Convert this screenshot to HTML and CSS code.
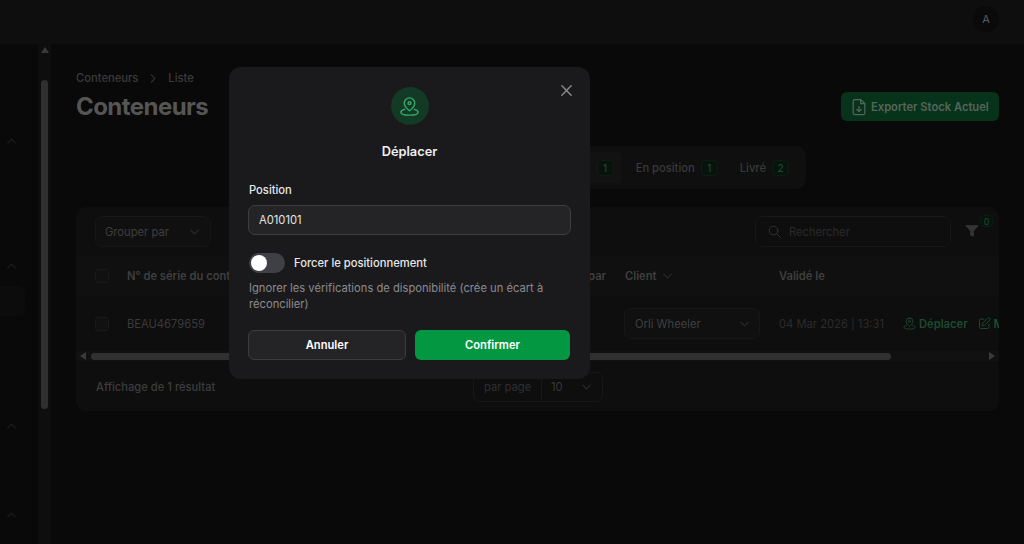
FILE: index.html
```html
<!DOCTYPE html>
<html lang="fr">
<head>
    <meta charset="UTF-8">
    <meta name="viewport" content="width=device-width, initial-scale=1.0">
    <title>Conteneurs</title>
    <link rel="stylesheet" href="styles.css">
</head>
<body>
    <div class="topbar">
        <div class="avatar">A</div>
    </div>

    <div class="layout">
        <aside class="sidebar">
            <div class="nav-group group-one"><svg class="nav-chevron" viewBox="0 0 12 8"><path d="M1 6.5l5-5 5 5"/></svg></div>
            <div class="nav-group group-two">
                <svg class="nav-chevron" viewBox="0 0 12 8"><path d="M1 6.5l5-5 5 5"/></svg>
                <div class="nav-active"></div>
            </div>
            <div class="nav-group group-three"><svg class="nav-chevron" viewBox="0 0 12 8"><path d="M1 6.5l5-5 5 5"/></svg></div>
            <div class="nav-group"><svg class="nav-chevron" viewBox="0 0 12 8"><path d="M1 6.5l5-5 5 5"/></svg></div>
        </aside>

        <div class="side-scroll">
            <div class="arrow-up"></div>
            <div class="side-thumb"></div>
        </div>

        <main class="main">
            <div class="page-head">
                <div>
                    <div class="breadcrumb">
                        <span>Conteneurs</span>
                        <svg class="crumb-sep" viewBox="0 0 8 12"><path d="M1.5 1l5 5-5 5"/></svg>
                        <span>Liste</span>
                    </div>
                    <h1 class="title">Conteneurs</h1>
                </div>
                <button class="export-btn">
                    <svg viewBox="0 0 24 24"><path d="M14 3H7a2 2 0 0 0-2 2v14a2 2 0 0 0 2 2h10a2 2 0 0 0 2-2V8z"/><path d="M14 3v5h5"/><path d="M12 11.5v6M9.5 15l2.5 2.5 2.5-2.5"/></svg>
                    Exporter Stock Actuel
                </button>
            </div>

            <div class="tabs-row">
                <div class="tabs">
                    <div class="tab tab-active">Validé <span class="count">1</span></div>
                    <div class="tab">En position <span class="count">1</span></div>
                    <div class="tab">Livré <span class="count">2</span></div>
                </div>
            </div>

            <section class="card">
                <div class="toolbar">
                    <div class="select group-select">
                        <span>Grouper par</span>
                        <svg class="chevron" viewBox="0 0 12 8"><path d="M1 1.5l5 5 5-5"/></svg>
                    </div>
                    <div class="toolbar-right">
                        <div class="search">
                            <svg viewBox="0 0 24 24"><circle cx="10.5" cy="10.5" r="7"/><path d="M16 16l5.5 5.5"/></svg>
                            <span>Rechercher</span>
                        </div>
                        <div class="filter">
                            <svg viewBox="0 0 24 24"><path d="M3 4h18l-7 8.5V20l-4-2v-5.500z"/></svg>
                            <span class="filter-badge">0</span>
                        </div>
                    </div>
                </div>

                <div class="table-row table-head">
                    <div class="cell col-check"><span class="checkbox"></span></div>
                    <div class="cell col-serial">N° de série du conteneur</div>
                    <div class="cell col-by">Validé par</div>
                    <div class="cell col-client">Client <svg class="chevron" viewBox="0 0 12 8"><path d="M1 1.500l5 5 5-5"/></svg></div>
                    <div class="cell col-date">Validé le</div>
                </div>

                <div class="table-row table-body">
                    <div class="cell col-check"><span class="checkbox"></span></div>
                    <div class="cell col-serial">BEAU4679659</div>
                    <div class="cell col-by"></div>
                    <div class="cell col-client">
                        <div class="select client-select">
                            <span>Orli Wheeler</span>
                            <svg class="chevron" viewBox="0 0 12 8"><path d="M1 1.500l5 5 5-5"/></svg>
                        </div>
                    </div>
                    <div class="cell col-date">04 Mar 2026 | 13:31</div>
                    <div class="cell col-actions">
                        <span class="action">
                            <svg viewBox="0 0 24 24"><path d="M12 3a5.500 5.500 0 0 0-5.500 5.500c0 3.500 5.500 8 5.500 8s5.500-4.500 5.500-8A5.500 5.500 0 0 0 12 3z"/><circle cx="12" cy="8.500" r="1.500"/><path d="M7 15c-2.500.6-4 1.600-4 2.900C3 19.900 7 21 12 21s9-1.100 9-3.100c0-1.300-1.500-2.300-4-2.900"/></svg>
                            Déplacer
                        </span>
                        <span class="action">
                            <svg viewBox="0 0 24 24"><path d="M11 5H6a2 2 0 0 0-2 2v11a2 2 0 0 0 2 2h11a2 2 0 0 0 2-2v-5"/><path d="M17.500 3.500a2.100 2.100 0 0 1 3 3L12 15l-4 1 1-4z"/></svg>
                            Modifier
                        </span>
                    </div>
                </div>

                <div class="h-scroll">
                    <span class="arrow-left"></span>
                    <div class="h-thumb"></div>
                    <span class="arrow-right"></span>
                </div>

                <div class="card-footer">
                    <span class="result-count">Affichage de 1 résultat</span>
                    <div class="per-page">
                        <span class="per-label">par page</span>
                        <span class="per-value">10</span>
                        <svg class="chevron" viewBox="0 0 12 8"><path d="M1 1.500l5 5 5-5"/></svg>
                    </div>
                </div>
            </section>
        </main>
    </div>

    <div class="modal">
        <button class="modal-close" aria-label="Fermer">
            <svg viewBox="0 0 14 14"><path d="M2 2l10 10M12 2L2 12"/></svg>
        </button>
        <div class="modal-icon">
            <svg viewBox="0 0 24 24"><path d="M12 3a5.500 5.500 0 0 0-5.500 5.500c0 3.500 5.500 8 5.500 8s5.500-4.500 5.500-8A5.500 5.500 0 0 0 12 3z"/><circle cx="12" cy="8.500" r="1.500"/><path d="M7 15c-2.500.6-4 1.600-4 2.900C3 19.900 7 21 12 21s9-1.100 9-3.100c0-1.300-1.500-2.300-4-2.900"/></svg>
        </div>
        <h2 class="modal-title">Déplacer</h2>

        <label class="field-label" for="position">Position</label>
        <input class="field-input" id="position" type="text" value="A010101">

        <div class="toggle-row">
            <span class="toggle"><span class="toggle-knob"></span></span>
            <span class="toggle-label">Forcer le positionnement</span>
        </div>
        <p class="toggle-help">Ignorer les vérifications de disponibilité (crée un écart à réconcilier)</p>

        <div class="modal-actions">
            <button class="btn btn-cancel">Annuler</button>
            <button class="btn btn-confirm">Confirmer</button>
        </div>
    </div>
</body>
</html>
```

FILE: styles.css
```css
* {
    margin: 0;
    padding: 0;
    box-sizing: border-box;
    font-family: Inter, "Liberation Sans", sans-serif;
}

html, body {
    height: 544px;
    overflow: hidden;
}

body {
    background-color: #090909;
    color: #555;
    font-size: 11.2px;
}

svg {
    fill: none;
    stroke: currentColor;
    stroke-width: 1.5;
    stroke-linecap: round;
    stroke-linejoin: round;
    flex-shrink: 0;
}

/* top bar */
.topbar {
    height: 44px;
    background-color: #0e0e0e;
    display: flex;
    align-items: center;
    justify-content: flex-end;
    padding: 0 25px 7px 0;
}

.avatar {
    width: 26px;
    height: 26px;
    border-radius: 50%;
    background-color: #0a0a0a;
    color: #5c5c5c;
    font-size: 11px;
    display: flex;
    align-items: center;
    justify-content: center;
}

.layout {
    display: flex;
    height: 500px;
}

/* sidebar */
.sidebar {
    width: 38px;
    padding-top: 92px;
    color: #1f1f1f;
}

.nav-group {
    padding-top: 2px;
}

.group-one {
    height: 125px;
}

.group-two {
    height: 160px;
}

.group-three {
    height: 89px;
}

.nav-chevron {
    display: block;
    width: 9px;
    height: 6px;
    margin-left: 7px;
}

.nav-active {
    width: 25px;
    height: 30px;
    margin-top: 17px;
    background-color: #0c0c0c;
    border-radius: 0 6px 6px 0;
}

.side-scroll {
    width: 13px;
    background-color: #0e0e0e;
    padding-top: 3px;
}

.arrow-up {
    width: 0;
    height: 0;
    margin: 0 auto;
    border-left: 4px solid transparent;
    border-right: 4px solid transparent;
    border-bottom: 6px solid #3a3a3a;
}

.side-thumb {
    width: 7px;
    height: 329px;
    margin: 27px auto 0;
    background-color: #2f2f2f;
    border-radius: 4px;
}

/* page */
.main {
    flex: 1;
    min-width: 0;
    padding: 27px 25px 0;
}

.page-head {
    display: flex;
    justify-content: space-between;
    align-items: flex-start;
}

.breadcrumb {
    display: flex;
    align-items: center;
    gap: 10px;
    height: 14px;
    font-weight: 500;
    color: #3b3b3b;
}

.crumb-sep {
    width: 6px;
    height: 9px;
    margin: 0 2px;
    color: #2e2e2e;
}

.title {
    margin-top: 6px;
    font-size: 24px;
    line-height: 32px;
    font-weight: 700;
    letter-spacing: -0.55px;
    color: #555;
}

.export-btn {
    display: flex;
    align-items: center;
    gap: 2px;
    width: 158px;
    height: 29px;
    margin-top: 21px;
    padding-left: 8px;
    border: none;
    border-radius: 6px;
    background-color: #06331a;
    color: #56655b;
    font-size: 11.2px;
    font-weight: 600;
}

.export-btn svg {
    width: 20px;
    height: 20px;
}

.tabs-row {
    display: flex;
    margin-top: 23px;
    padding-right: 193px;
    justify-content: flex-end;
}

.tabs {
    display: flex;
    align-items: center;
    height: 43px;
    padding: 0 9px;
    border-radius: 10px;
    background-color: #0f0f0f;
    gap: 6px;
}

.tab {
    display: flex;
    align-items: center;
    gap: 6px;
    height: 31px;
    padding: 0 8px;
    border-radius: 6px;
    font-weight: 500;
    color: #3a3a3a;
}

.tab-active {
    background-color: #121212;
}

.count {
    width: 17px;
    height: 16px;
    display: flex;
    align-items: center;
    justify-content: center;
    border: 1px solid #0c1d13;
    border-radius: 4px;
    background-color: #09130d;
    color: #1c4a30;
    font-size: 10px;
}

/* table card */
.card {
    margin-top: 18px;
    height: 204px;
    background-color: #0e0e0e;
    border-radius: 10px;
    overflow: hidden;
}

.toolbar {
    display: flex;
    justify-content: space-between;
    align-items: flex-start;
    height: 49px;
    padding: 9px 0 0 19px;
}

.select {
    display: flex;
    align-items: center;
    justify-content: space-between;
    height: 31px;
    border: 1px solid #171717;
    border-radius: 7px;
    background-color: #101010;
    color: #3f3f3f;
}

.group-select {
    width: 116px;
    padding: 0 11px 0 9px;
}

.chevron {
    width: 9px;
    height: 6px;
    color: #2c2c2c;
}

.toolbar-right {
    display: flex;
    align-items: flex-start;
}

.search {
    display: flex;
    align-items: center;
    gap: 7px;
    width: 196px;
    height: 31px;
    padding-left: 11px;
    border: 1px solid #171717;
    border-radius: 7px;
    color: #2a2a2a;
}

.search svg {
    width: 15px;
    height: 15px;
    color: #333;
}

.filter {
    position: relative;
    width: 48px;
    height: 31px;
}

.filter svg {
    position: absolute;
    left: 13px;
    top: 7px;
    width: 16px;
    height: 16px;
    fill: #333;
    color: #333;
}

.filter-badge {
    position: absolute;
    left: 29px;
    top: -1px;
    width: 13px;
    height: 12px;
    display: flex;
    align-items: center;
    justify-content: center;
    border: 1px solid #0c1d13;
    border-radius: 4px;
    background-color: #09130d;
    color: #1c4a30;
    font-size: 9px;
}

.table-row {
    display: flex;
    align-items: center;
    white-space: nowrap;
}

.table-head {
    height: 40px;
    background-color: #101010;
    font-weight: 600;
    color: #3f3f3f;
}

.table-body {
    height: 55px;
    color: #3a3a3a;
}

.cell {
    display: flex;
    align-items: center;
    flex-shrink: 0;
    overflow: hidden;
}

.col-check {
    width: 51px;
    padding-left: 19px;
}

.col-serial {
    width: 370px;
}

.col-by {
    width: 128px;
    justify-content: flex-end;
    padding-right: 19px;
}

.col-client {
    width: 154px;
    gap: 6px;
    overflow: visible;
}

.col-date {
    width: 125px;
    color: #2c2c2c;
}

.table-head .col-date {
    color: #3f3f3f;
}

.col-actions {
    gap: 9px;
    width: 95px;
    margin-left: -2px;
    overflow: visible;
}

.checkbox {
    display: block;
    width: 14px;
    height: 14px;
    border: 1px solid #1a1a1a;
    border-radius: 3px;
    background-color: #111;
}

.client-select {
    width: 136px;
    margin-left: -1px;
    padding: 0 10px;
}

.action {
    display: flex;
    align-items: center;
    gap: 2px;
    color: #1d4a30;
    font-weight: 600;
}

.action svg {
    width: 15px;
    height: 15px;
}

.h-scroll {
    display: flex;
    align-items: center;
    height: 10px;
    background-color: #111;
    padding: 0 4px;
}

.arrow-left {
    width: 0;
    height: 0;
    border-top: 4px solid transparent;
    border-bottom: 4px solid transparent;
    border-right: 6px solid #3a3a3a;
}

.arrow-right {
    width: 0;
    height: 0;
    margin-left: auto;
    border-top: 4px solid transparent;
    border-bottom: 4px solid transparent;
    border-left: 6px solid #3a3a3a;
}

.h-thumb {
    width: 800px;
    height: 7px;
    margin-left: 5px;
    border-radius: 4px;
    background-color: #303030;
}

.card-footer {
    display: flex;
    align-items: center;
    height: 50px;
    padding: 2px 0 0 20px;
}

.result-count {
    width: 377px;
    font-weight: 500;
    color: #3d3d3d;
}

.per-page {
    display: flex;
    align-items: center;
    width: 130px;
    height: 30px;
    border: 1px solid #171717;
    border-radius: 7px;
    color: #2e2e2e;
}

.per-label {
    width: 68px;
    padding-left: 10px;
    line-height: 28px;
    border-right: 1px solid #171717;
}

.per-value {
    width: 40px;
    padding-left: 9px;
    color: #3a3a3a;
}

/* modal */
.modal {
    position: absolute;
    left: 229px;
    top: 67px;
    width: 361px;
    height: 312px;
    padding: 20px 20px 0;
    background-color: #1a1a1c;
    border-radius: 12px;
}

.modal-close {
    position: absolute;
    right: 17px;
    top: 17px;
    width: 13px;
    height: 13px;
    border: none;
    background: none;
    color: #8a8a8c;
}

.modal-close svg {
    display: block;
    width: 13px;
    height: 13px;
}

.modal-icon {
    width: 38px;
    height: 38px;
    margin: 0 auto;
    display: flex;
    align-items: center;
    justify-content: center;
    border-radius: 50%;
    background-color: #123a25;
    color: #3aa56b;
}

.modal-icon svg {
    width: 23px;
    height: 23px;
}

.modal-title {
    margin-top: 17px;
    text-align: center;
    font-size: 12.8px;
    line-height: 20px;
    font-weight: 600;
    color: #f0f0f0;
}

.field-label {
    display: block;
    margin-top: 20px;
    font-size: 11.2px;
    line-height: 16px;
    font-weight: 500;
    color: #e8e8e8;
}

.field-input {
    display: block;
    width: 323px;
    height: 30px;
    margin: 7px 0 0 -1px;
    padding: 0 10px;
    border: 1px solid #3d3d40;
    border-radius: 7px;
    background-color: #242426;
    color: #e4e4e4;
    font-size: 11.2px;
    outline: none;
}

.toggle-row {
    display: flex;
    align-items: center;
    gap: 9px;
    margin-top: 18px;
}

.toggle {
    display: block;
    width: 36px;
    height: 20px;
    padding: 2px;
    border-radius: 10px;
    background-color: #3f3f46;
}

.toggle-knob {
    display: block;
    width: 16px;
    height: 16px;
    border-radius: 50%;
    background-color: #fff;
}

.toggle-label {
    font-size: 11.2px;
    font-weight: 500;
    color: #e8e8e8;
}

.toggle-help {
    margin-top: 7px;
    font-size: 11.2px;
    line-height: 16px;
    color: #8b8b90;
}

.modal-actions {
    display: flex;
    gap: 9px;
    margin: 18px 0 0 -1px;
}

.btn {
    height: 30px;
    border-radius: 6px;
    font-size: 11.2px;
    font-weight: 600;
    color: #fff;
}

.btn-cancel {
    width: 158px;
    border: 1px solid #3d3d40;
    background-color: #242426;
}

.btn-confirm {
    width: 155px;
    border: none;
    background-color: #049741;
}
```
